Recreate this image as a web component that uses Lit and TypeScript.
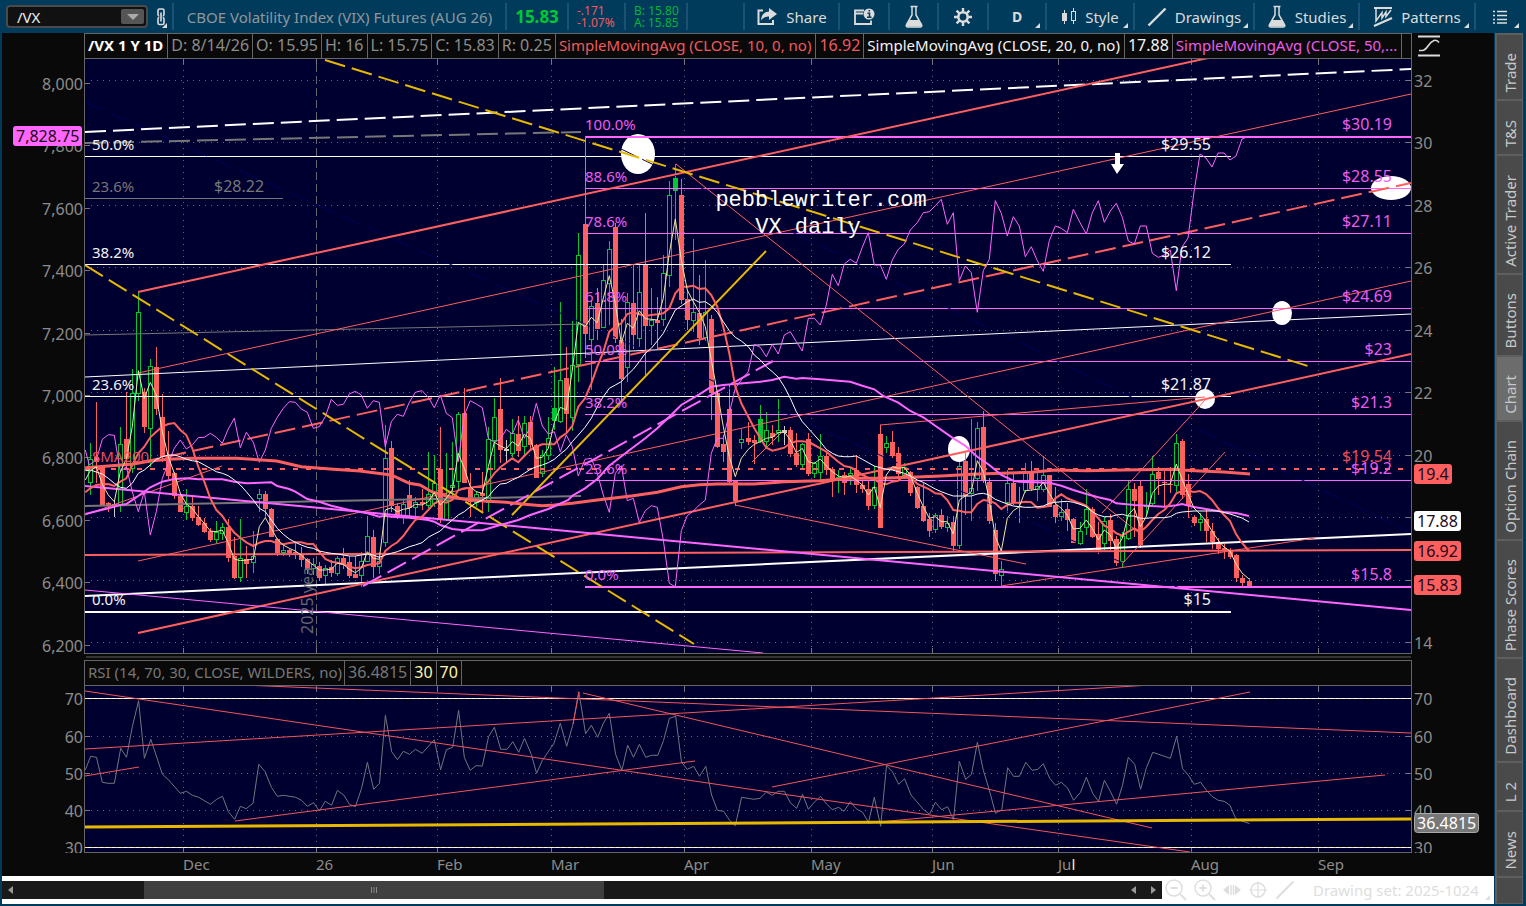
import { LitElement, html, svg, css } from "lit";
import { customElement, state } from "lit/decorators.js";

/* Series are stored as survey blocks: a letter selects origin and units per pixel. */
const BLOCKS: Record<string, number[]> = {
  A: [0, 350, 3, 3],
  B: [410, 350, 3, 3],
  C: [410, 60, 3, 3],
  D: [820, 360, 3, 3],
  E: [820, 60, 3, 3],
  P: [0, 0, 1, 1],
  R: [0, 655, 2.063, 3],
  S: [760, 655, 2.047, 3],
};

function points(data: string): string {
  let b = BLOCKS.P;
  const out: string[] = [];
  for (const tok of data.trim().split(/\s+/)) {
    if (BLOCKS[tok]) {
      b = BLOCKS[tok];
      continue;
    }
    const [x, y] = tok.split(",").map(Number);
    out.push(`${(b[0] + x / b[2]).toFixed(1)},${(b[1] + y / b[3]).toFixed(1)}`);
  }
  return out.join(" ");
}

interface Candle { x: number; h: number; t: number; b: number; l: number; k: string }

function candles(data: string): Candle[] {
  let o = BLOCKS.P;
  const out: Candle[] = [];
  for (const row of data.trim().split(/[;\n]+/)) {
    const r = row.trim();
    if (!r) continue;
    if (BLOCKS[r]) {
      o = BLOCKS[r];
      continue;
    }
    const f = r.split(/[ ,]+/);
    const y = (i: number) => o[1] + Number(f[i]) / o[3];
    out.push({ x: Math.floor(o[0] + Number(f[0]) / o[2]), h: y(1), t: y(2), b: y(3), l: y(4), k: f[5] });
  }
  return out;
}

const CANDLES = candles(`
A
271 279 328 395 434 g;289 155 322 336 400 r;307 345 347 465 468 r;325 455 460 468 485 r;343 450 463 468 502 w;361 230 283 463 485 g;379 125 268 328 350 r
397 57 128 355 370 g;415 -173 -115 128 152 g;433 115 125 230 250 r;451 27 48 235 350 g;469 -8 52 176 195 r;487 132 202 320 335 r;505 243 320 377 388 r
523 365 370 437 447 r;541 430 437 486 487 r;559 417 468 485 509 g;577 440 468 503 512 r;595 468 502 524 527 r;613 503 520 545 550 r;631 535 542 570 575 r
649 513 547 566 580 g;667 520 530 550 570 g;685 508 532 623 637 r;703 560 618 684 687 r;721 507 625 682 695 g;739 587 627 641 684 r;760 543 619 637 668 g
778 418 433 445 485 g;796 424 432 477 500 r;814 474 477 560 562 r;832 565 568 608 617 r;850 585 601 607 617 g;868 595 600 608 620 r;886 572 605 608 626 r
904 592 612 629 650 r;922 625 628 656 672 r;940 625 641 655 675 g;958 637 648 684 692 r;976 645 653 676 702 g;994 630 652 668 680 r;1012 617 625 670 677 g
1030 595 625 645 656 r;1048 617 637 678 683 r;1066 617 672 683 685 r;1084 607 632 676 710 g;1102 498 559 634 636 g;1120 540 562 650 685 r;1138 605 632 649 672 g
1156 225 325 577 592 g;1174 273 295 467 487 r;1192 460 468 500 508 r;1210 450 463 502 522 g;1228 390 436 473 500 r
B
16 440 455 470 500 g;36 418 457 463 480 r;55 305 433 465 475 g;73 315 400 460 470 g;91 230 357 507 518 r;109 308 450 508 512 g;127 275 405 410 450 g
145 186 193 394 420 g;163 115 188 398 400 r;181 370 412 457 500 r;199 422 433 455 472 g;217 365 428 437 490 r;235 230 268 457 487 g;253 145 202 270 360 g
271 85 177 301 340 r;289 270 296 302 340 w;307 207 250 308 320 g;325 198 252 303 320 r;343 197 220 287 315 g;361 197 216 285 300 r;379 282 286 383 385 r
397 300 316 370 382 g;415 200 265 316 330 g;433 50 175 212 240 G;451 -144 91 212 218 g;469 -8 84 191 245 r;487 -87 46 202 243 g;505 -350 -284 43 95 g
C
525 480 492 821 893 r;544 720 738 838 990 g;562 683 730 806 840 r;580 615 660 802 805 g;598 543 568 670 795 g;616 490 500 838 850 r;634 778 840 956 1020 r
652 700 727 922 965 g;670 615 730 824 868 r;688 612 697 835 862 g;706 460 615 797 945 r;724 683 780 794 855 g;742 710 780 788 868 r;760 585 640 778 797 g
778 362 406 646 680 g;796 313 355 392 540 G;814 355 405 720 732 r;832 690 716 779 810 r;850 537 757 779 815 g;868 645 759 833 855 r;886 600 757 830 843 g
904 765 777 998 1080 r
B
922 122 130 292 295 r;940 255 282 305 335 r;958 105 177 395 400 r;976 390 392 454 467 r;994 238 268 275 297 g;1015 215 264 276 285 r;1033 255 271 278 343 r
1051 165 208 275 280 G;1069 187 241 272 290 g;1087 225 250 260 285 r;1105 147 241 247 275 g;1123 227 241 250 285 w;1141 230 240 311 320 r;1159 250 309 345 350 r
1177 278 283 343 360 g;1195 250 267 371 378 r;1213 335 340 370 385 g
D
1 222 287 337 365 g;19 280 288 330 345 r;37 322 328 357 410 r;55 330 352 360 400 g;73 335 346 370 404 r;91 320 338 346 375 g;109 285 331 374 400 r
127 360 375 388 398 r;145 362 388 437 450 r;163 318 380 436 447 g;181 195 223 503 503 r;199 228 250 262 280 g;217 213 247 288 293 r;235 262 280 341 350 r
253 310 320 346 350 g;271 333 336 398 407 r;292 378 381 443 447 r;310 370 438 483 487 r;328 460 477 512 530 r;346 460 466 508 520 g;364 447 466 502 507 r
382 468 488 502 515 g;400 468 487 557 577 r;418 305 318 556 567 g;436 280 303 407 465 r;454 178 384 398 483 g;472 187 205 355 393 g;490 154 202 360 370 r
508 355 366 482 492 r;526 490 510 641 662 r;544 603 628 646 677 g;562 330 370 425 458 g;580 342 370 430 435 r;598 380 439 442 488 r;616 310 332 390 400 g
634 303 335 388 392 r;652 340 378 388 423 g;670 287 346 387 395 g;688 345 346 440 442 r;706 380 435 471 488 r;724 418 455 468 482 g;742 430 447 479 512 r
760 475 477 548 550 r;780 486 514 548 555 g;799 388 447 502 525 g;817 440 446 530 535 r;835 485 522 569 582 r;853 472 482 548 570 g;871 462 480 543 570 r
889 527 538 608 618 r;907 515 529 604 622 g;925 362 388 533 540 g;943 370 388 422 530 r;961 362 379 556 565 r;979 395 435 438 470 g;997 287 343 430 435 g
1015 320 336 356 405 r;1033 330 365 370 440 r;1051 322 371 374 400 r;1069 222 250 374 400 g
P
1182 439 441 495 499 r;1188 474 484 506 518 r;1194 515 517 523 526 r;1200 513 519 522 531 g;1206 510 519 531 542 r;1212 523 531 542 549 r;1218 538 542 549 554 r
1224 544 548 551 559 r;1230 548 551 557 559 r;1236 554 555 578 582 r;1242 575 578 583 586 r;1249 578 581 586 588 r
`);

const FAST = points(`A 256,390 271,362 289,350 307,403 325,435 343,455 361,365 379,328 397,230 415,62 433,145 451,97 469,135 487,245 505,320 523,370 541,430 559,462 577,475 595,500 613,520 631,543 649,545 667,540 685,580 703,627 721,632 739,630 760,628 778,530 796,503 814,535 832,568 850,585 868,595 886,603 904,615 922,632 940,645 958,660 976,660 994,657 1012,640 1030,643 1048,658 1066,668 1084,655 1102,605 1120,625 1138,628 1156,480 1174,473 1192,485 1210,478 1228,475
B 16,463 36,465 55,455 73,428 91,465 109,445 127,420 145,310 163,355 181,410 199,425 217,430 235,350 253,277 271,288 289,296 307,275 325,288 343,253 361,265 379,325 397,322 415,295 433,218 451,172 469,180 487,60
C 505,787 525,800 544,772 562,788 580,715 598,647 616,730 634,850 652,790 670,805 688,752 706,776 724,778 742,780 760,715 778,580 796,477 814,600 832,690 850,725 868,757 886,800 904,900
B 922,127 940,230 958,320 976,380 994,325 1015,298 1033,283 1051,275 1069,265 1087,262 1105,248 1123,245 1141,270 1159,308 1177,295 1195,335 1213,340
D 1,297 19,318 37,335 55,348 73,352 91,348 109,360 127,375 145,405 163,380 181,443 199,345 217,320 235,325 253,322 271,345 292,400 310,440 328,475 346,470 364,485 382,485 400,522 418,420 436,408 454,395 472,302 490,335 508,420 526,530 544,573 562,475 580,452 598,440 616,392 634,390 652,388 670,367 688,400 706,430 724,445 742,465 760,507 780,505 799,480 817,505 835,540 853,510 871,525 889,565 907,535 925,465 943,445 961,500 979,470 997,400 1015,378 1033,373 1051,372 1069,312
P 1182,479 1188,494 1194,508 1200,514 1206,521 1212,531 1218,540 1224,547 1230,551 1236,564 1242,573 1249,579`);

const SMA10 = points(`A 256,427 271,415 289,405 307,403 325,402 343,408 361,395 379,385 397,345 415,310 433,290 451,262 469,245 487,230 505,222 523,219 541,240 559,255 577,295 595,350 613,395 631,445 649,480 667,498 685,525 703,548 721,563 739,577 760,588 778,578 796,573 814,573 832,580 850,583 868,579 886,577 904,577 922,582 940,582 958,605 976,627 994,635 1012,638 1030,642 1048,650 1066,655 1084,652 1102,645 1120,642 1138,640 1156,603 1174,588 1192,577 1210,558 1228,533
B 16,510 36,500 55,480 73,460 91,452 109,458 127,450 145,420 163,415 181,413 199,410 217,412 235,395 253,370 271,352 289,338 307,325 325,337 343,318 361,300 379,290 397,283 415,283 433,283 451,262 469,250 487,228 505,170 525,145 544,100 562,50
C 580,875 598,815 616,800 634,790 652,762 670,757 688,763 706,768 724,765 742,763 760,760 778,745 796,700 814,680 832,680 850,677 868,687 886,685 904,705 922,740 940,800
B 958,10 976,110 994,160 1015,200 1033,235 1051,265 1069,293 1087,302 1105,298 1123,293 1141,280 1159,274 1177,274 1195,276 1213,285
D 1,265 19,275 37,290 55,305 73,318 91,322 109,330 127,345 145,353 163,358 181,370 199,373 217,365 235,362 253,345 271,350 292,372 310,380 328,388 346,400 364,402 382,420 400,450 418,452 436,457 454,457 472,432 490,420 508,422 526,430 544,447 562,435 580,428 598,428 616,425 634,427 652,443 670,441 688,438 706,415 724,403 742,415 760,422 780,430 799,437 817,455 835,475 853,497 871,505 889,520 907,527 925,515 943,505 961,515 979,500 997,480 1015,462 1033,450 1051,430 1069,400
P 1182,491 1188,491 1194,492 1200,491 1206,494 1212,500 1218,508 1224,515 1230,521 1236,534 1242,543 1249,551`);

const SMA20 = points(`A 256,362 271,360 289,366 307,372 325,385 343,400 361,412 379,415 397,400 415,370 433,360 451,345 469,328 487,320 505,315 523,315 541,320 559,328 577,332 595,335 613,345 631,355 649,365 667,370 685,377 703,390 721,405 739,425 760,450 778,475 796,485 814,510 832,535 850,553 868,567 886,577 904,585 922,592 940,595 958,603 976,607 994,610 1012,612 1030,615 1048,618 1066,618 1084,615 1102,612 1120,615 1138,622 1156,615 1174,610 1192,605 1210,598 1228,590
B 16,585 36,578 55,562 73,552 91,543 109,525 127,510 145,495 163,485 181,470 199,458 217,450 235,440 253,418 271,402 289,400 307,390 325,382 343,370 361,358 379,350 397,345 415,338 433,328 451,312 469,298 487,275 505,255 525,232 544,205 562,170 580,140 598,115 616,105 634,95 652,75 670,58 688,35 706,10
C 724,865 742,843 760,820 778,785 796,750 814,738 832,725 850,717 868,727 886,725 904,737 922,757 940,785 958,812 976,832 994,843 1015,860 1033,885
B 1051,30 1069,50 1087,65 1105,82 1123,110 1141,145 1159,185 1177,215 1195,235 1213,255
D 1,245 19,268 37,280 55,288 73,290 91,290 109,288 127,298 145,308 163,318 181,323 199,328 217,330 235,335 253,340 271,348 292,360 310,367 328,377 346,387 364,395 382,402 400,408 454,408 472,402 490,400 508,405 526,418 544,425 562,432 580,438 598,440 616,442 634,442 652,440 670,438 688,430 706,427 724,425 742,424 760,427 780,433 799,440 817,455 835,465 853,470 871,470 889,465 907,463 925,468 943,468 961,475 979,475 997,473 1033,473 1051,470 1069,460
P 1182,512 1194,511 1206,511 1218,511 1230,514 1236,516 1242,518 1249,522`);

const SMA50 = points(`A 256,492 289,484 325,475 361,465 379,462 415,438 451,412 487,395 523,387 560,385 595,388 667,388 703,395 740,400 814,397 832,408 868,417 886,425 922,447 958,455 994,467 1048,480 1102,490 1138,500 1156,497 1174,500 1228,503
B 55,510 73,515 91,525 127,537 163,541 217,541 271,525 325,510 361,495 415,477 475,450 487,437 525,415 562,387 598,347 652,305 706,265 742,235 778,200 814,165 868,133 904,110 940,105 1000,100 1051,95 1087,90 1123,80 1159,86 1177,84
D 1,58 55,62 91,65 127,77 163,88 190,108 235,128 271,153 310,172 346,197 400,235 436,257 472,290 508,315 544,345 580,362 598,365 688,368 724,377 760,390 799,402 835,412 871,420 889,430 943,435 1033,440 1069,436
P 1182,504 1194,507 1206,509 1224,512 1236,513 1249,516`);

const SMA200 = points(`A 256,353 325,348 400,342 451,333 505,328 577,325 710,325 830,333 904,350 1000,358 1080,363 1174,375 1228,400
B 30,405 65,425 109,438 163,448 220,453 289,457 343,463 397,467 433,465 487,460 562,450 670,437 742,427 814,410 868,404 922,402 1033,402 1123,395
D 0,362 91,355 181,355 271,352 364,348 454,343 544,340 634,337 706,330 799,332 907,330 1069,328
P 1182,470 1200,471 1224,472 1250,474`);

const COMPARE = points(`A 256,300 268,345 289,330 307,268 325,254 343,256 361,365 379,350 397,425 415,485 433,425 451,555 469,485 487,385 505,340 523,295 541,270 559,297 577,285 595,263 613,262 631,250 649,262 667,280 685,237 703,205 721,293 739,247 760,277 778,337 796,300 814,235 832,202 850,175 868,155 886,157 904,177 922,187 940,235 958,230 976,200 994,148 1012,166 1030,163 1048,132 1066,124 1084,135 1102,175 1120,152 1138,157 1156,290 1174,215 1192,193 1210,199 1228,157
B 16,127 36,122 55,142 73,173 91,135 109,190 127,203 145,335 163,195 181,152 199,162 217,173 235,265 253,277 271,268 289,238 307,252 325,210 343,265 361,232 379,160 397,228 415,252 433,245 451,305 469,255 487,290 505,378 525,328 544,325 562,370 580,435 598,487 616,370 634,347 652,452 670,445 688,517 706,482 724,467 742,472 760,570 778,700 796,710 814,542 832,497 850,483 868,465 886,450 904,310 922,265 940,265 958,190 976,115 994,90 1015,65
C 1033,853 1051,862 1069,890 1087,853 1105,882 1123,825 1141,815 1159,845 1177,873 1195,775 1213,775
E 1,795 19,735 37,643 55,677 73,612 91,598 109,610 127,562 145,518 163,615 181,615 199,658 217,600 235,568 253,552 271,510 292,488 310,458 328,455 346,437 364,418 382,493 400,458 418,662 436,618 454,638 472,757 490,632 508,598 526,422 544,460 562,528 580,470 598,498 616,590 634,560 652,602 670,634 688,542 706,498 724,505 742,518 760,448 780,488 799,522 817,458 835,422 853,487 871,453 889,430 907,472 925,543 943,552 961,498 979,498 997,580 1015,592 1033,585 1051,570 1069,692
P 1182,247 1188,238 1194,192 1200,154 1206,158 1212,167 1218,153 1224,153 1230,160 1236,156 1242,139 1247,137`);

const RSI = points(`R 176,345 187,304 199,307 211,382 223,385 236,385 249,280 261,307 273,215 286,137 298,310 311,253 335,358 348,375 372,415 385,409 397,421 410,427 434,448 447,433 459,424 471,470 484,493 496,454 508,461 522,445 534,328 547,350 560,397 572,424 585,421 610,427 622,436 634,454 647,443 659,468 671,439 684,451 696,406 709,420 721,448 733,455 746,400 758,322 771,403 783,385 795,181 808,290 820,314 832,289 845,298 857,283 871,295 896,254 909,344 921,284 934,277 946,166 958,308 970,346 982,332 995,333 1008,245 1020,217 1033,283 1046,283 1058,260 1070,292 1082,250 1096,298 1107,355 1119,316 1143,265 1156,205 1169,274 1182,208 1194,110 1208,236 1220,211 1233,247 1245,204 1257,175 1270,298 1283,346 1295,271 1307,307 1319,268 1332,307 1344,301 1357,301 1369,256 1381,190 1394,184 1406,322 1418,343 1431,334 1443,364 1456,334 1468,420 1480,466 1493,469 1505,496 1517,512 1530,427 1555,433
S 0,430 13,411 25,421 37,409 50,409 62,443 75,460 87,418 99,463 111,442 124,424 137,448 148,464 161,457 172,469 185,440 197,461 210,472 222,502 234,427 247,514 259,332 271,350 284,388 296,371 309,420 321,440 335,464 347,478 359,442 372,464 384,455 396,494 408,319 421,373 433,358 445,262 457,346 469,403 482,475 495,464 507,338 519,364 531,364 544,322 557,346 569,343 580,326 593,370 605,391 617,382 630,400 642,436 656,412 668,367 681,415 693,439 705,376 717,409 730,448 742,391 754,307 767,328 779,403 791,338 804,292 840,310 853,244 865,341 877,361 889,388 902,382 914,406 925,424 938,436 950,439 962,451 974,491 1002,506`);

/* class, x1, y1, x2, y2 */
type Seg = [string, number, number, number, number];
const TREND_LINES: Seg[] = [
  ["navy", 85, 102, 1231, 611],
  ["navy", 617, 147, 1411, 533],
  ["gray", 85, 335, 585, 324],
  ["gray w2", 85, 506, 581, 496],
  ["gray w2 dash", 85, 143, 581, 132],
  ["white", 85, 377, 1411, 314],
  ["white w2", 85, 596, 1411, 534],
  ["white w2 dash", 85, 132, 1411, 69],
  ["red w2", 138, 292, 1208, 58],
  ["red", 138, 373, 1411, 94],
  ["red w2 dash", 138, 463, 1411, 183],
  ["red", 138, 561, 1411, 281],
  ["red w2", 138, 633, 1411, 354],
  ["red w2", 85, 555, 1411, 550],
  ["red", 676, 164, 1139, 533],
  ["red", 880, 425, 1205, 397],
  ["red", 735, 505, 1026, 564],
  ["red", 1001, 586, 1315, 538],
  ["red", 1102, 513, 1206, 399],
  ["red", 1122, 564, 1225, 452],
  ["red", 752, 462, 783, 431],
  ["red", 85, 515, 222, 466],
  ["pink w2", 85, 486, 1411, 610],
  ["pink", 85, 590, 763, 653],
  ["pink w2 dash", 363, 586, 773, 361],
  ["gold w2", 512, 515, 766, 251],
  ["gold w2 dash", 325, 60, 1308, 366],
  ["gold w2 dash", 85, 265, 694, 644],
];

const RSI_LINES: Seg[] = [
  ["red", 85, 691, 789, 795],
  ["red", 789, 795, 1190, 852],
  ["red", 242, 685, 1411, 733],
  ["red", 85, 749, 1151, 685],
  ["red", 85, 776, 139, 767],
  ["red", 235, 821, 695, 761],
  ["red", 583, 693, 1152, 828],
  ["red", 772, 787, 1250, 692],
  ["red", 868, 823, 1385, 775],
  ["red", 573, 724, 579, 692],
];

const FIB_PINK: [number, string, string][] = [
  [136, "100.0%", "$30.19"],
  [188, "88.6%", "$28.55"],
  [233, "78.6%", "$27.11"],
  [308, "61.8%", "$24.69"],
  [361, "50.0%", "$23"],
  [414, "38.2%", "$21.3"],
  [480, "23.6%", "$19.2"],
  [586, "0.0%", "$15.8"],
];
const FIB_WHITE: [number, string, string][] = [
  [156, "50.0%", "$29.55"],
  [264, "38.2%", "$26.12"],
  [396, "23.6%", "$21.87"],
  [611, "0.0%", "$15"],
];
const SPOTS: number[][] = [
  [638, 154, 17, 20],
  [1391, 188, 20, 12],
  [1282, 313, 10, 12],
  [1205, 399, 10, 10],
  [959, 449, 11, 13],
];
const MONTHS: [string, number][] = [
  ["Dec", 183], ["26", 316], ["Feb", 437], ["Mar", 551], ["Apr", 684],
  ["May", 811], ["Jun", 932], ["Jul", 1058], ["Aug", 1191], ["Sep", 1318],
];
const ROWS = [80, 142, 205, 267, 330, 392, 455, 517, 580, 642];
const LEFT_AXIS: [string, number][] = [
  ["8,000", 84], ["7,800", 146], ["7,600", 209], ["7,400", 271], ["7,200", 334],
  ["7,000", 396], ["6,800", 458], ["6,600", 521], ["6,400", 583], ["6,200", 646],
];
const RIGHT_AXIS: [string, number][] = [
  ["32", 81], ["30", 143], ["28", 206], ["26", 268], ["24", 331], ["22", 393], ["20", 456], ["14", 643],
];
const RSI_AXIS: [string, number][] = [["70", 699], ["60", 737], ["50", 774], ["40", 811], ["30", 848]];

const line = ([cls, x1, y1, x2, y2]: Seg) =>
  svg`<line class=${cls} x1=${x1} y1=${y1} x2=${x2} y2=${y2}></line>`;

@customElement("price-pane")
class PricePane extends LitElement {
  static styles = css`
    :host { display: block; }
    svg { display: block; width: 100%; height: auto; }
    text { font-family: "Noto Sans", "Open Sans", sans-serif; font-size: 16px; }
    line, polyline { fill: none; stroke-width: 1px; }
    .bg { fill: #000030; }
    .frame { fill: none; stroke: #666; }
    .dots { stroke: #66666e; stroke-dasharray: 1 5; }
    .year { stroke: #66666e; stroke-dasharray: 8 4; }
    .tick { stroke: #777; }
    .axis { fill: #8c8c8c; }
    .end { text-anchor: end; }
    .white { stroke: #fff; }
    .gray { stroke: #777; }
    .red { stroke: #ff5f5f; }
    .pink { stroke: #ff66ff; }
    .gold { stroke: #e6b800; }
    .navy { stroke: #00005c; stroke-dasharray: 21 7; }
    .cream { stroke: #f0e6a8; }
    .w2 { stroke-width: 2px; }
    .w3 { stroke-width: 3px; }
    .dash { stroke-dasharray: 21 7; }
    .dot { stroke-dasharray: 5 8; }
    .crisp { shape-rendering: crispEdges; }
    .t-white { fill: #f4f4f4; }
    .t-gray { fill: #777; }
    .t-dim { fill: #66666e; }
    .t-red { fill: #e84f56; }
    .t-pink { fill: #ec5cec; }
    .small { font-size: 15px; }
    .note { font-family: "Liberation Mono", monospace; font-size: 22px; fill: #fff; text-anchor: middle; }
    .spot { fill: #fff; }
    .r-body { fill: #ff5f5f; }
    .g-body { fill: #000030; stroke: #00c833; }
    .gf-body { fill: #00c833; }
    .w-body { fill: #ccc; }
    .g-wick { stroke: #00c833; }
    .w-wick { stroke: #ccc; }
    .tag-red { fill: #ff5f5f; }
    .tag-pink { fill: #ff66ff; }
    .tag-white { fill: #fff; }
    .on-tag { fill: #1c0a1c; }
    .splitter { fill: #333; }
  `;

  private candle(c: Candle) {
    const x = c.x + 0.5;
    const wick = c.k === "r" ? "red" : c.k === "w" ? "w-wick" : "g-wick";
    const top = Math.round(c.t);
    const h = Math.max(1, Math.round(c.b) - top);
    const body =
      c.k === "g"
        ? svg`<rect class="g-body" x=${x - 2} y=${top + 0.5} width="4" height=${h}></rect>`
        : svg`<rect class=${c.k === "r" ? "r-body" : c.k === "w" ? "w-body" : "gf-body"} x=${c.x - 2} y=${top} width="5" height=${h}></rect>`;
    return svg`<line class=${wick} x1=${x} x2=${x} y1=${Math.round(c.h)} y2=${Math.round(c.l)}></line>${body}`;
  }

  private tag(cls: string, x: number, y: number, w: number, label: string) {
    return svg`<rect class=${cls} x=${x} y=${y - 10} width=${w} height="20" rx="3"></rect>
      <text class="on-tag" x=${x + 3} y=${y + 6}>${label}</text>`;
  }

  render() {
    return html`<svg viewBox="2 59 1492 601" role="img" aria-label="VX daily price chart">
      <defs><clipPath id="plot"><rect x="85" y="59" width="1326" height="594"></rect></clipPath></defs>
      <rect class="bg" x="85" y="59" width="1326" height="594"></rect>
      <g class="crisp">
        ${ROWS.map((y) => line(["dots", 91, y + 0.5, 1411, y + 0.5]))}
        ${MONTHS.map(([m, x]) => line([m === "26" ? "year" : "dots", x + 0.5, 64, x + 0.5, 648]))}
        ${MONTHS.map(([, x]) => svg`${line(["tick", x + 0.5, 59, x + 0.5, 64])}${line(["tick", x + 0.5, 648, x + 0.5, 653])}`)}
        ${LEFT_AXIS.map(([, y]) => line(["tick", 85, y - 0.5, 90, y - 0.5]))}
        ${ROWS.map((y) => line(["tick", 1406, y + 0.5, 1411, y + 0.5]))}
      </g>
      ${LEFT_AXIS.map(([t, y]) => svg`<text class="axis end" x="83" y=${y + 6}>${t}</text>`)}
      ${RIGHT_AXIS.map(([t, y]) => svg`<text class="axis" x="1414" y=${y + 6}>${t}</text>`)}
      <g clip-path="url(#plot)">
        ${SPOTS.map(([x, y, rx, ry]) => svg`<ellipse class="spot" cx=${x} cy=${y} rx=${rx} ry=${ry}></ellipse>`)}
        ${CANDLES.map((c) => this.candle(c))}
        <g class="crisp">
          ${FIB_WHITE.map(([y]) => line([y === 611 ? "white w2" : "white", 85, y + 0.5, 1231, y + 0.5]))}
          ${FIB_PINK.map(([y]) => line([y === 136 || y === 586 ? "pink w2" : "pink", 585, y + 0.5, 1411, y + 0.5]))}
          ${line(["gray", 85, 198.5, 283, 198.5])}
          ${line(["red", 585.5, 136, 585.5, 357])}
          ${line(["red w2 dot", 85, 469, 1405, 469])}
        </g>
        ${TREND_LINES.map(line)}
        <polyline class="pink" points=${COMPARE}></polyline>
        <polyline class="red w3" points=${SMA200}></polyline>
        <polyline class="pink w2" points=${SMA50}></polyline>
        <polyline class="red w2" points=${SMA10}></polyline>
        <polyline class="white" points=${SMA20}></polyline>
        <polyline class="cream" points=${FAST}></polyline>
        <path class="spot" d="M1115 153h5v11h4l-7 10-6-10h4z"></path>
        <text class="t-dim" transform="translate(313 634) rotate(-90)">2025 yea</text>
      </g>
      ${FIB_WHITE.map(([y, pct, price]) => svg`<text class="t-white small" x="92" y=${y - 6}>${pct}</text><text class="t-white end" x="1211" y=${y - 6}>${price}</text>`)}
      ${FIB_PINK.map(([y, pct, price]) => svg`<text class="t-pink small" x="585" y=${y - 6}>${pct}</text><text class="t-pink end" x="1392" y=${y - 6}>${price}</text>`)}
      <text class="t-gray small" x="92" y="192">23.6%</text>
      <text class="t-gray" x="214" y="192">$28.22</text>
      <text class="t-red small" x="92" y="462">SMA200</text>
      <text class="t-red end" x="1392" y="462">$19.54</text>
      <text class="note" x="821" y="206">pebblewriter.com</text>
      <text class="note" x="808" y="233">VX daily</text>
      <path class="frame crisp" d="M84.5 59V653.5H1411.5V59"></path>
      ${this.tag("tag-pink", 13, 136, 69, "7,828.75")}
      ${this.tag("tag-red", 1414, 474, 38, "19.4")}
      ${this.tag("tag-white", 1414, 521, 47, "17.88")}
      ${this.tag("tag-red", 1414, 551, 47, "16.92")}
      ${this.tag("tag-red", 1414, 585, 47, "15.83")}
      <rect class="splitter" x="86" y="656" width="1325" height="2"></rect>
    </svg>`;
  }
}

@customElement("rsi-pane")
class RsiPane extends LitElement {
  static styles = css`
    :host { display: block; }
    svg { display: block; width: 100%; height: auto; }
    text { font-family: "Noto Sans", "Open Sans", sans-serif; font-size: 16px; fill: #8c8c8c; }
    line, polyline { fill: none; stroke-width: 1px; }
    .bg { fill: #000030; }
    .frame { fill: none; stroke: #666; }
    .dots { stroke: #66666e; stroke-dasharray: 1 5; }
    .tick { stroke: #777; }
    .red { stroke: #f2555b; }
    .base { stroke: #fff; }
    .band { stroke: #ffe98a; stroke-dasharray: 3 3; }
    .rsi { stroke: #74747c; }
    .gold { stroke: #e6b800; stroke-width: 3px; }
    .crisp { shape-rendering: crispEdges; }
    .end { text-anchor: end; }
    .small { font-size: 15px; }
    .lit { fill: #fff3b0; }
    .tag { fill: #777; stroke: #aaa; }
    .on-tag { fill: #fff; }
  `;

  render() {
    return html`<svg viewBox="2 685 1492 191" role="img" aria-label="RSI chart">
      <defs>
        <clipPath id="rsi"><rect x="85" y="686" width="1326" height="166"></rect></clipPath>
        <clipPath id="scale"><rect x="2" y="685" width="1492" height="168"></rect></clipPath>
      </defs>
      <rect class="bg" x="85" y="685" width="1326" height="167"></rect>
      <g class="crisp">
        ${[736.5, 773.5, 810.5].map((y) => line(["dots", 91, y, 1411, y]))}
        ${MONTHS.map(([, x]) => line(["dots", x + 0.5, 691, x + 0.5, 846]))}
        ${MONTHS.map(([, x]) => svg`${line(["tick", x + 0.5, 686, x + 0.5, 691])}${line(["tick", x + 0.5, 847, x + 0.5, 852])}`)}
        ${[698.5, 847.5].map((y) => svg`${line(["base", 85, y, 1411, y])}${line(["band", 85, y, 1411, y])}`)}
        ${[736.5, 773.5, 810.5].map((y) => svg`${line(["tick", 85, y, 90, y])}${line(["tick", 1406, y, 1411, y])}`)}
      </g>
      <g clip-path="url(#rsi)">
        <polyline class="rsi" points=${RSI}></polyline>
        ${RSI_LINES.map(line)}
        ${line(["gold", 85, 827, 1411, 819])}
      </g>
      <path class="frame crisp" d="M84.5 685.5H1411.5V852.5H84.5Z"></path>
      <g clip-path="url(#scale)">
        ${RSI_AXIS.map(([t, y]) => svg`<text class="end" x="83" y=${y + 6}>${t}</text><text x="1414" y=${y + 6}>${t}</text>`)}
      </g>
      <rect class="tag" x="1414.5" y="813.5" width="64" height="19" rx="3"></rect>
      <text class="on-tag" x="1417" y="829">36.4815</text>
      ${MONTHS.map(([m, x]) =>
        m === "Jul"
          ? svg`<text class="small" x=${x} y="870">Ju<tspan class="lit">l</tspan></text>`
          : svg`<text class="small" x=${x} y="870">${m}</text>`)}
    </svg>`;
  }
}

const flask = html`<svg class="ico" width="20" height="24" viewBox="0 0 20 24"><path d="M6.500 1.500h7M8 2v8L2.500 19.500q-1 2.500 1.500 2.500h12q2.500 0 1.500-2.500L12 10V2" fill="none" stroke="#dcdcdc" stroke-width="1.500"/><path d="M5.500 15h9l3 5q.5 1.500-1 1.500h-13q-1.500 0-1-1.500z" fill="#dcdcdc"/></svg>`;
const gear = html`<svg class="ico" width="20" height="20" viewBox="0 0 20 20"><circle cx="10" cy="10" r="4.700" fill="none" stroke="#dcdcdc" stroke-width="2.600"/><path d="M10 1v4M10 15v4M1 10h4M15 10h4M3.600 3.600l3 3M13.400 13.400l3 3M3.600 16.400l3-3M13.400 6.600l3-3" stroke="#dcdcdc" stroke-width="2.400"/></svg>`;
const share = html`<svg class="ico" width="22" height="18" viewBox="0 0 22 18"><path d="M7 2.500H2.500V16H17v-4" fill="none" stroke="#dcdcdc" stroke-width="2"/><path d="M13 0l8 6-8 6V8.500Q8 8 5 12.500 5.500 4 13 3.500z" fill="#dcdcdc"/></svg>`;
const info = html`<svg class="ico" width="22" height="18" viewBox="0 0 22 18"><path d="M11 2.500H2V16H18v-3.500M2 5.500h8" fill="none" stroke="#dcdcdc" stroke-width="1.800"/><circle cx="16" cy="6" r="5.500" fill="#dcdcdc"/><path d="M14.500 5.300H16.500V9M14 9.200h4.500M15.500 2.700h1.600" fill="none" stroke="#003b5c" stroke-width="1.500"/></svg>`;
const style = html`<svg class="ico" width="16" height="20" viewBox="0 0 16 20"><path d="M3.500 3v14M12.500 1v4M12.500 13v4" stroke="#dcdcdc"/><rect x="1" y="6" width="5" height="8" fill="#dcdcdc"/><rect x="10.500" y="4.500" width="4" height="9" fill="none" stroke="#dcdcdc"/></svg>`;
const pencil = html`<svg class="ico" width="20" height="20" viewBox="0 0 20 20"><path d="M1.500 18.500L18.500 1.500" stroke="#dcdcdc" stroke-width="2.400"/></svg>`;
const pattern = html`<svg class="ico" width="20" height="22" viewBox="0 0 20 22"><path d="M1 2h18M1 20l18-8" stroke="#dcdcdc" stroke-width="2.200"/><path d="M3 3v12L9 6.500V12l4-6v4.500L18 4" fill="none" stroke="#dcdcdc" stroke-width="1.500"/></svg>`;
const list = html`<svg class="ico" width="14" height="14" viewBox="0 0 14 14"><path d="M0 1.500h2M4 1.500h10M0 5.500h2M4 5.500h10M0 9.500h2M4 9.500h10M0 13h2M4 13h10" stroke="#dcdcdc" stroke-width="1.500"/></svg>`;
const link = html`<svg class="ico" width="8" height="18" viewBox="0 0 8 18"><rect x="1" y="1" width="6" height="7" rx="1.500" fill="none" stroke="#dcdcdc" stroke-width="1.600"/><rect x="1" y="9.500" width="6" height="7" rx="1.500" fill="none" stroke="#dcdcdc" stroke-width="1.600"/><path d="M4 4v10" stroke="#003b5c" stroke-width="3.500"/><path d="M4 4.500v9" stroke="#dcdcdc" stroke-width="1.600"/></svg>`;

const TABS: [string, number][] = [
  ["Trade", 66], ["T&S", 55], ["Active Trader", 119], ["Buttons", 82], ["Chart", 65], ["Option Chain", 119],
  ["Phase Scores", 118], ["Dashboard", 104], ["L 2", 49], ["News", 66],
];

const PRICE_LEGEND: [string, string][] = [
  ["strong study", "/VX 1 Y 1D"], ["", "D: 8/14/26"], ["", "O: 15.95"], ["", "H: 16"], ["", "L: 15.75"], ["", "C: 15.83"], ["", "R: 0.25"],
  ["red study", "SimpleMovingAvg (CLOSE, 10, 0, no)"], ["red", "16.92"],
  ["white study", "SimpleMovingAvg (CLOSE, 20, 0, no)"], ["white", "17.88"],
  ["pink study", "SimpleMovingAvg (CLOSE, 50,..."],
];
const RSI_LEGEND: [string, string][] = [
  ["dim study", "RSI (14, 70, 30, CLOSE, WILDERS, no)"], ["dim", "36.4815"], ["cream", "30"], ["cream", "70"],
];

@customElement("app-root")
class AppRoot extends LitElement {
  @state() private tab = "Chart";

  static styles = css`
    :host { display: block; background: #003b5c; font: 16px/20px "Noto Sans", "Open Sans", sans-serif; color: #dcdcdc; }
    * { box-sizing: border-box; }
    button { font: inherit; color: inherit; background: none; border: 0; padding: 0; margin: 0; }
    svg { display: block; flex: none; }
    .page { display: flex; flex-direction: column; padding: 0 2px 2px; }
    .toolbar { display: grid; height: 33px; padding: 3px 0; font-size: 15px;
      grid-template-columns: 172px 333px 62px 57px 62px minmax(57px, 1fr) 95px 50px 49px 50px 58px 88px 120px 105px 116px 48px; }
    .cell { position: relative; display: flex; align-items: center; justify-content: center; gap: 8px; border-right: 2px solid #1b5273; white-space: nowrap; }
    .cell:last-child { border-right: 0; }
    .menu::after { content: ""; position: absolute; right: 5px; bottom: 2px; border-style: solid; border-width: 0 0 5px 5px; border-color: transparent transparent #dcdcdc; }
    .symbol { justify-content: flex-start; padding-left: 4px; gap: 9px; }
    .box { display: flex; align-items: center; width: 142px; height: 23px; background: #111; border: 2px solid #4a4a4a; border-radius: 4px; padding-right: 2px; }
    .box input { flex: 1; min-width: 0; background: none; border: 0; padding: 0 0 0 9px; color: #eee; font: 15px/18px "Noto Sans", "Open Sans", sans-serif; outline: none; }
    .drop { width: 23px; height: 15px; background: #555; border-radius: 2px; display: flex; align-items: center; justify-content: center; }
    .drop::after { content: ""; border-style: solid; border-width: 6px 6px 0; border-color: #aaa transparent transparent; }
    .name { color: #8f979c; }
    .last { color: #00c832; font-weight: 700; font-size: 17px; }
    .pair { flex-direction: column; gap: 0; align-items: flex-start; padding-left: 8px; font-size: 12px; line-height: 12px; }
    .down { color: #f05a5f; }
    .up { color: #00b634; }
    .agg { font-weight: 700; font-size: 14px; }
    .body { display: flex; }
    .main { flex: 1; min-width: 0; background: #090909; }
    .head { display: flex; align-items: center; padding-left: 82px; }
    .legend { flex: 1; min-width: 0; display: flex; height: 26px; border: 1px solid #666; color: #8c8c8c; line-height: 22px; font-size: 16px; }
    .legend.low { border-bottom: 0; height: 25px; }
    .item { padding: 0 3px; border-right: 1px solid #666; white-space: nowrap; }
    .study { font-size: 15px; padding-right: 4px; }
    .low .study { padding-right: 2px; }
    .strong { color: #fff; font-weight: 700; }
    .red { color: #f05a5f; }
    .white { color: #f4f4f4; }
    .pink { color: #ec5cec; }
    .dim { color: #777; }
    .cream { color: #fff3b0; }
    .side { width: 82px; padding-left: 6px; }
    .tabs { width: 28px; margin: 0 1px; background: #5e5e5e; display: flex; flex-direction: column; gap: 2px; padding: 2px 1px 1px 2px; }
    .tab { width: 25px; padding-top: 12px; background: #4a4a4a; color: #c8c8c8; display: flex; align-items: center; justify-content: center; font-size: 15px; line-height: 24px; white-space: nowrap; }
    .tab span { writing-mode: vertical-rl; transform: rotate(180deg); }
    .tab.on { background: #6c6c6c; }
    .tab.fill { flex: 1; }
    .foot { display: flex; height: 28px; background: #fff; align-items: center; }
    .track { flex: 1; height: 18px; background: #191919; display: grid; grid-template-columns: 142px 460px 1fr auto; align-items: center; }
    .thumb { height: 18px; background: #404040; display: flex; align-items: center; justify-content: center; }
    .arrow { height: 18px; display: flex; align-items: center; padding: 0 6px; gap: 15px; }
    .tools { display: flex; align-items: center; gap: 7px; width: 332px; padding-left: 3px; color: #dedede; font-size: 15px; }
    .tools .set { position: relative; flex: 1; text-align: left; margin-left: 11px; }
    .tools .set::after { content: ""; position: absolute; right: 4px; bottom: 0; border-style: solid; border-width: 0 0 5px 5px; border-color: transparent transparent #dedede; }
  `;

  render() {
    const tri = (d: string) => html`<svg width="5" height="8" viewBox="0 0 5 8"><path d=${d} fill="#999"></path></svg>`;
    return html`<div class="page">
      <header class="toolbar">
        <div class="cell symbol menu">
          <div class="box"><input aria-label="Symbol" value="/VX" /><button class="drop" aria-label="Recent symbols"></button></div>
          <button aria-label="Link">${link}</button>
        </div>
        <div class="cell name">CBOE Volatility Index (VIX) Futures (AUG 26)</div>
        <div class="cell last">15.83</div>
        <div class="cell pair down"><span>-.171</span><span>-1.07%</span></div>
        <div class="cell pair up"><span>B: 15.80</span><span>A: 15.85</span></div>
        <div class="cell"></div>
        <button class="cell">${share} Share</button>
        <button class="cell" aria-label="Info">${info}</button>
        <button class="cell" aria-label="Lab">${flask}</button>
        <button class="cell" aria-label="Settings">${gear}</button>
        <button class="cell agg menu">D</button>
        <button class="cell menu">${style} Style</button>
        <button class="cell menu">${pencil} Drawings</button>
        <button class="cell menu">${flask} Studies</button>
        <button class="cell menu">${pattern} Patterns</button>
        <button class="cell menu" aria-label="Menu">${list}</button>
      </header>
      <div class="body">
        <main class="main">
          <div class="head">
            <div class="legend">${PRICE_LEGEND.map(([c, t]) => html`<span class="item ${c}">${t}</span>`)}</div>
            <button class="side" aria-label="Scale">
              <svg width="22" height="22" viewBox="0 0 22 22"><path d="M0 1.500h22M0 20.500h22" stroke="#dcdcdc" stroke-width="2"/><path d="M1 15.500l3 0q3 0 6-4.500t6-5.500q3-1 5 2" fill="none" stroke="#dcdcdc" stroke-width="1.600"/></svg>
            </button>
          </div>
          <price-pane></price-pane>
          <div class="head">
            <div class="legend low">${RSI_LEGEND.map(([c, t]) => html`<span class="item ${c}">${t}</span>`)}</div>
            <div class="side"></div>
          </div>
          <rsi-pane></rsi-pane>
          <footer class="foot">
            <div class="track">
              <div class="arrow">${tri("M5 0v8L0 4z")}</div>
              <div class="thumb"><svg width="8" height="8" viewBox="0 0 8 8"><path d="M1.500 1v6M4 1v6M6.500 1v6" stroke="#888"/></svg></div>
              <div></div>
              <div class="arrow">${tri("M5 0v8L0 4z")}${tri("M0 0v8l5-4z")}</div>
            </div>
            <div class="tools">
              <button aria-label="Zoom out"><svg width="22" height="22" viewBox="0 0 22 22"><circle cx="9" cy="9" r="8" fill="none" stroke="#dedede" stroke-width="1.500"/><path d="M5.500 9h7M15 15l6 6" stroke="#dedede" stroke-width="1.800"/></svg></button>
              <button aria-label="Zoom in"><svg width="22" height="22" viewBox="0 0 22 22"><circle cx="9" cy="9" r="8" fill="none" stroke="#dedede" stroke-width="1.500"/><path d="M5.500 9h7M9 5.500v7M15 15l6 6" stroke="#dedede" stroke-width="1.800"/></svg></button>
              <button aria-label="Expand"><svg width="18" height="12" viewBox="0 0 18 12"><path d="M6 1v10L0 6zM12 1v10l6-5z" fill="#dedede"/><path d="M8 1v10M10.500 1v10" stroke="#dedede" stroke-width="1.500"/></svg></button>
              <button aria-label="Crosshair"><svg width="20" height="18" viewBox="0 0 20 18"><circle cx="10" cy="9" r="7" fill="none" stroke="#dedede" stroke-width="1.500"/><path d="M1 9h18M10 1v16" stroke="#dedede" stroke-width="1.200"/></svg></button>
              <button aria-label="Line"><svg width="20" height="20" viewBox="0 0 20 20"><path d="M1.500 18.500L18.500 1.500" stroke="#dedede" stroke-width="2.200"/></svg></button>
              <button class="set">Drawing set: 2025-1024</button>
            </div>
          </footer>
        </main>
        <nav class="tabs">
          ${TABS.map(([t, h]) => html`<button class="tab ${t === this.tab ? "on" : ""}" style="height:${h - 2}px" @click=${() => (this.tab = t)}><span>${t}</span></button>`)}
          <div class="tab fill"></div>
        </nav>
      </div>
    </div>`;
  }
}
